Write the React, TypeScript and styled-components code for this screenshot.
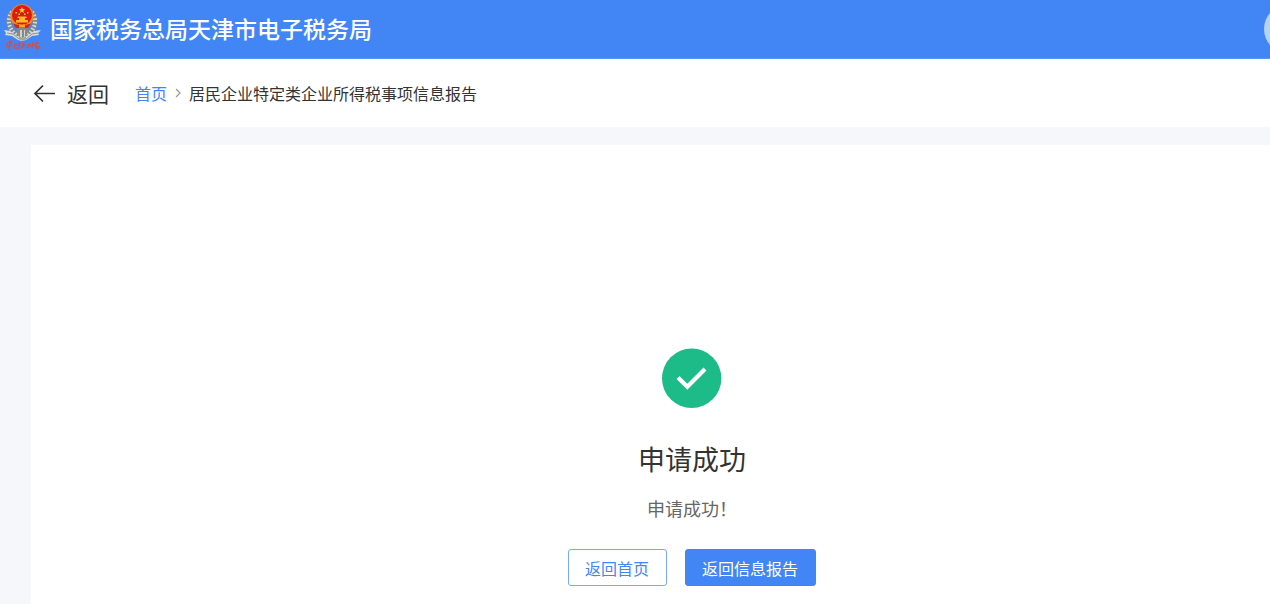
import React from "react";
import styled, { createGlobalStyle } from "styled-components";

const GlobalStyle = createGlobalStyle`
  * { box-sizing: border-box; }
  html, body, #root { height: 100%; }
  body {
    margin: 0;
    background: #f6f7fa;
    color: #333;
    font-family: "Noto Sans CJK SC", sans-serif;
    font-size: 16px;
  }
`;

const Page = styled.div`
  display: flex;
  flex-direction: column;
  min-height: 100%;
  overflow: hidden;
`;

const Header = styled.header`
  display: flex;
  align-items: center;
  height: 59px;
  padding-left: 4px;
  background: #4286f6;
  border-bottom: 1px solid #5a96f8;
  overflow: hidden;
`;

const SiteName = styled.h1`
  margin: 0 0 2px 9px;
  color: #fff;
  font-size: 23px;
  font-weight: 500;
  line-height: 32px;
  white-space: nowrap;
`;

const Avatar = styled.button`
  flex: none;
  width: 48px;
  height: 48px;
  margin: 0 -42px 0 auto;
  padding: 0;
  border: 0;
  border-radius: 50%;
  background: #b5d3fa;
`;

const NavBar = styled.nav`
  display: flex;
  align-items: center;
  height: 68px;
  padding: 0 32px;
  background: #fff;
  white-space: nowrap;
`;

const BackButton = styled.button`
  display: flex;
  align-items: center;
  gap: 11px;
  margin-right: 26px;
  padding: 0;
  border: 0;
  background: none;
  color: #333;
  font-family: inherit;
  font-size: 21px;
  line-height: 32px;
`;

const Crumbs = styled.div`
  display: flex;
  align-items: center;
  gap: 8px;
  line-height: 24px;
`;

const CrumbLink = styled.a`
  color: #4286f6;
  text-decoration: none;
`;

const Panel = styled.main`
  display: flex;
  flex: 1;
  flex-direction: column;
  align-items: center;
  margin: 18px 0 0 31px;
  padding: 203px 0 18px 83px;
  background: #fff;
`;

const ResultTitle = styled.h2`
  margin: 31px 0 0;
  font-size: 27px;
  font-weight: 400;
  line-height: 40px;
`;

const ResultText = styled.p`
  margin: 15px 0 0;
  color: #666;
  font-size: 18px;
  line-height: 28px;
`;

const Actions = styled.div`
  display: flex;
  gap: 18px;
  margin-top: 27px;
`;

const Button = styled.button<{ $primary?: boolean }>`
  height: 37px;
  padding: 0 17px 0 16px;
  border: 1px solid ${(p) => (p.$primary ? "#4286f6" : "#77a9f9")};
  border-radius: 3px;
  background: ${(p) => (p.$primary ? "#4286f6" : "#fff")};
  color: ${(p) => (p.$primary ? "#fff" : "#4286f6")};
  font-family: inherit;
  font-size: 16px;
  line-height: 24px;
  white-space: nowrap;
`;

const EmblemArt = styled.svg`
  flex: none;
  margin-bottom: 4px;
`;

const Emblem = () => (
  <EmblemArt width="37" height="48" viewBox="0 0 37 48" aria-hidden="true">
    <path d="M8 9C2 17 5 28 15 34M28 9c6 8 3 19-7 25" fill="none" stroke="#7f8a92" strokeWidth="5" />
    <path d="M8 9C2 17 5 28 15 34M28 9c6 8 3 19-7 25" fill="none" stroke="#d9dad4" strokeWidth="4" strokeDasharray="1.500 2" />
    <path d="M12 25h13l-3 10-3 3h-1l-3-3z" fill="#85898b" />
    <path d="M16 27h2v9h-2zM20 27h1v8h-1z" fill="#d4d4cf" />
    <path d="M0 27l6 1 7 5 5 2 5-2 7-5 7-1-3 3 1 2-7 1-6 4-4 1-4-1-6-4-7-1 1-2z" fill="#dcdddb" />
    <path d="M3 30l6 1 6 5h7l6-5 6-1" fill="none" stroke="#8b9299" strokeWidth="1" />
    <path d="M15 33l3.500 2 3.500-2v3l-3.500 2-3.500-2z" fill="#a3a5a5" />
    <circle cx="18" cy="13" r="11.700" fill="#ee8a1c" />
    <circle cx="18" cy="12" r="10" fill="#dd1a12" />
    <path d="M18 4l.9 2 2.200.2-1.700 1.500.5 2.200-1.900-1.100-1.900 1.100.5-2.200-1.700-1.500 2.200-.2z" fill="#ffd02b" />
    <path d="M11.500 9H13v1.500h-1.500zM23 9h1.500v1.500H23zM14.500 10.500H16V12h-1.500zM20 10.500h1.500V12H20z" fill="#ffc52a" />
    <path d="M14 13.500h8l1 1.500h-2v2h3v2.500H12V17h3v-2h-2z" fill="#ffb923" />
    <path d="M9 20.500q9 3 18 0l-3 4.500H12z" fill="#d82412" />
    <path d="M15 21.500h6v3h-6z" fill="#f7a52a" />
    <g fill="none" stroke="#e04a3a" strokeWidth="1.200" strokeLinecap="round">
      <path d="M3 40l5-1-1 4-4 .5zM6 37l-1 10" />
      <path d="M11 41l-1 4M11 41l5-1-1 5-4 .5M12 42.500l3-.5" />
      <path d="M18 41l3-1M19 40l-.5 5M18 44l3-2M23 42l3-.5-2 3M22 45l3-1" />
      <path d="M27 43l3-1M29 39l-1 6M31 41l4-1M33 39l-1 4M32 44l3-.5-1 2-2-.5z" />
    </g>
  </EmblemArt>
);

const BackArrow = () => (
  <svg width="24" height="20" viewBox="0 0 24 20" fill="none" stroke="#333" strokeWidth="1.700" aria-hidden="true">
    <path d="M11 2.500L3 10.500l8 8M3 10.500h20" />
  </svg>
);

const Chevron = () => (
  <svg width="6" height="10" viewBox="0 0 6 10" fill="none" stroke="#999" strokeWidth="1.200" aria-hidden="true">
    <path d="M1 1l4 4-4 4" />
  </svg>
);

const SuccessIcon = () => (
  <svg width="60" height="60" viewBox="0 0 60 60" aria-hidden="true">
    <circle cx="29.700" cy="30.300" r="29.700" fill="#1cbb87" />
    <path d="M16 29.500l9.300 9.300L43 21" fill="none" stroke="#fff" strokeWidth="4.200" />
  </svg>
);

export default function App() {
  return (
    <Page>
      <GlobalStyle />
      <Header>
        <Emblem />
        <SiteName>国家税务总局天津市电子税务局</SiteName>
        <Avatar type="button" aria-label="用户" />
      </Header>
      <NavBar>
        <BackButton type="button">
          <BackArrow />
          返回
        </BackButton>
        <Crumbs>
          <CrumbLink href="#">首页</CrumbLink>
          <Chevron />
          <span>居民企业特定类企业所得税事项信息报告</span>
        </Crumbs>
      </NavBar>
      <Panel>
        <SuccessIcon />
        <ResultTitle>申请成功</ResultTitle>
        <ResultText>申请成功！</ResultText>
        <Actions>
          <Button type="button">返回首页</Button>
          <Button type="button" $primary>返回信息报告</Button>
        </Actions>
      </Panel>
    </Page>
  );
}
